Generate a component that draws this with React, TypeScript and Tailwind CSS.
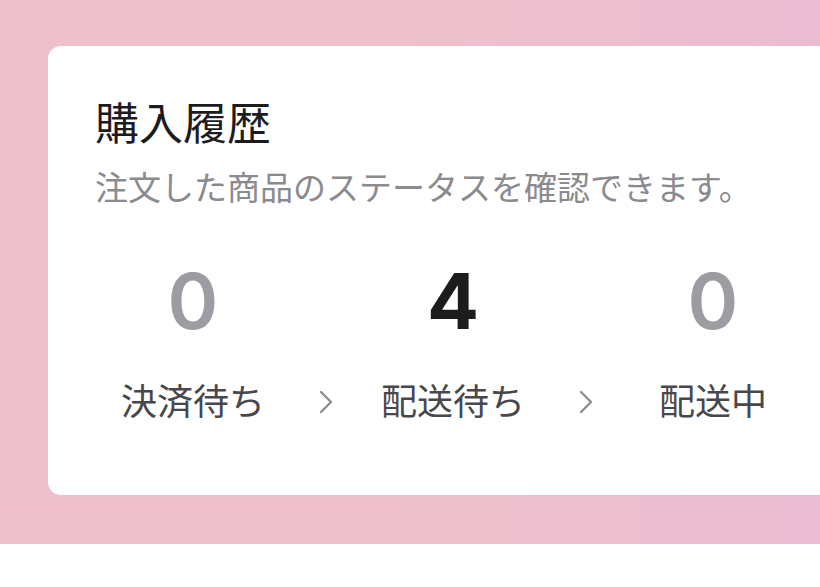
import React from 'react'

// Order status counts
const STATUSES = [
  { label: '決済待ち', count: 0 },
  { label: '配送待ち', count: 4 },
  { label: '配送中', count: 0 },
]

const Chevron = () => (
  <svg width="14" height="24" viewBox="0 0 14 24" fill="none" className="block">
    <polyline
      points="2,2 12,12 2,22"
      stroke="#8e8e93"
      strokeWidth="2.4"
      strokeLinecap="round"
      strokeLinejoin="round"
    />
  </svg>
)

const App = () => {
  return (
    <div className="w-[820px] h-[587px] overflow-hidden bg-white font-['Noto_Sans_CJK_JP',sans-serif]">
      {/* Pink header band */}
      <div className="h-[544px] pt-[46px] bg-gradient-to-r from-[#efc0cb] via-[#efc0cb] to-[#eabcd2] overflow-hidden">
        <div className="ml-[48px] w-[820px] h-[449px] bg-white rounded-l-[13px] pl-[47px] pt-[53px]">
          <h1 className="text-[44px] leading-none text-[#1c1c1e] font-normal">購入履歴</h1>
          <p className="mt-[27px] text-[33px] leading-none text-[#8a8a8f]">
            注文した商品のステータスを確認できます。
          </p>

          {/* Status row */}
          <div className="flex mt-[60px]">
            {STATUSES.map((s, i) => (
              <React.Fragment key={s.label}>
                {i > 0 && (
                  <div className="w-[64px] flex justify-center items-end pb-[3px] pl-[6px]">
                    <Chevron />
                  </div>
                )}
                <div className="w-[196px] flex flex-col items-center">
                  <span
                    className={
                      s.count > 0
                        ? "font-['Inter',sans-serif] font-bold text-[77px] leading-none text-[#1c1c1e]"
                        : "font-['Inter',sans-serif] font-semibold text-[77px] leading-none text-[#9c9ca3]"
                    }
                  >
                    {s.count}
                  </span>
                  <span className="mt-[41px] text-[36px] leading-none text-[#48484c]">{s.label}</span>
                </div>
              </React.Fragment>
            ))}
          </div>
        </div>
      </div>
    </div>
  )
}

export default App
